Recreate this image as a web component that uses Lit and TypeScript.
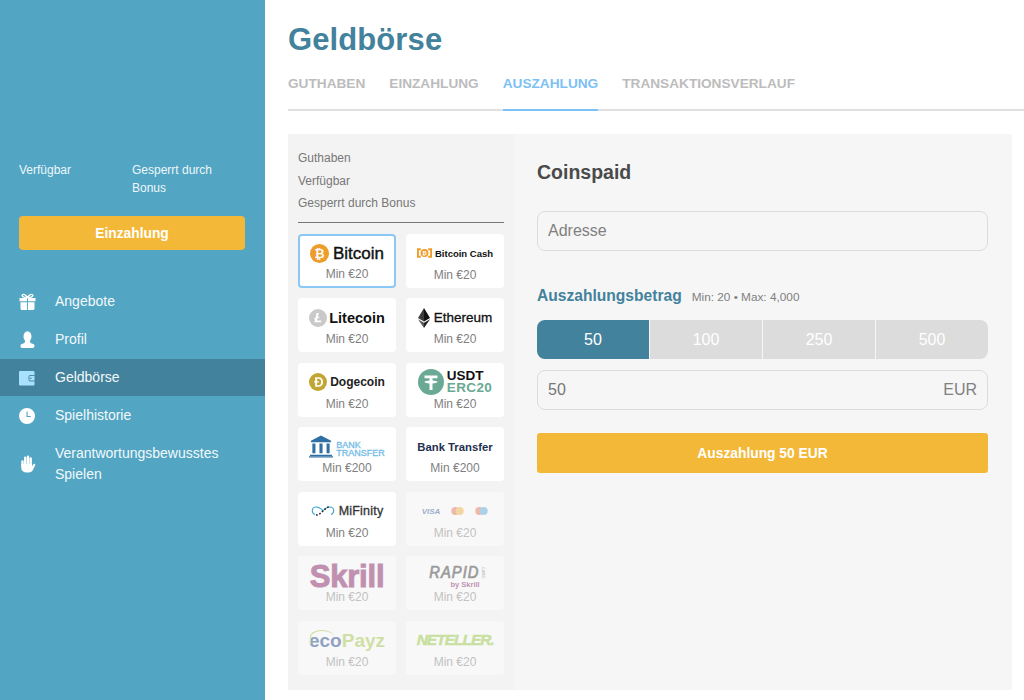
import { LitElement, html, css, svg } from "lit";
import { customElement } from "lit/decorators.js";

const nav = [
  { label: "Angebote", icon: svg`<path d="M.500 5h7.600v3.200H.500zM9 5h7.500v3.200H9zM1.500 9.200h6.600V17H3a1.500 1.500 0 0 1-1.500-1.500zM9 9.200h6.500v6.300A1.500 1.500 0 0 1 14 17H9z"/><path d="M8.500 4.500C6.500 1.500 4.500 1 3.500 1.700c-1 1-.2 2.800 5 2.800zm0 0c2-3 4-3.500 5-2.800 1 1 .2 2.800-5 2.800z" fill="none" stroke="#fff" stroke-width="1.400"/>` },
  { label: "Profil", icon: svg`<ellipse cx="8.500" cy="5.500" rx="4" ry="5.200"/><path d="M6.300 9.500h4.400l.8 2.500 3.300 1.300c1 .5 1.100 3.700-1 3.700H3.200c-2.100 0-2-3.200-1-3.700L5.500 12z"/>` },
  { label: "Geldbörse", active: true, icon: svg`<rect x="0" y="2" width="15.500" height="14.500" rx="1" fill="#a8e1fb"/><rect x="10" y="6.500" width="6" height="5.500" rx=".8" fill="#a8e1fb" stroke="#43829c" stroke-width=".9"/><circle cx="11.800" cy="9.200" r=".8" fill="#43829c"/>` },
  { label: "Spielhistorie", icon: svg`<path fill-rule="evenodd" d="M8 1a8 8 0 1 1 0 16A8 8 0 0 1 8 1zM7.500 4.500v5.500h4.300V9H8.600V4.500z"/>` },
  { label: "Verantwortungsbewusstes Spielen", icon: svg`<g stroke="#fff" stroke-width="2.400" stroke-linecap="round" fill="none"><path d="M3.500 6.500V11M6.200 2.800V10M9 1.800V10M11.700 3.400V11"/></g><path d="M2.300 9h10.600v2.600l1.200-2c.9-1.400 2.700-.6 2 .8l-2.100 4.300c-.9 1.700-2.300 2.800-4.400 2.800H7c-2.900 0-4.700-2-4.700-4.700z"/>` },
];

const btc = html`<svg class="logo" width="19" height="19" viewBox="0 0 20 20"><circle cx="10" cy="10" r="10" fill="#ee9c2c"/><text x="10" y="14.500" text-anchor="middle" class="glyph" font-size="13" fill="#fff">₿</text></svg>`;
const ltc = html`<svg class="logo" width="18" height="18" viewBox="0 0 18 18"><circle cx="9" cy="9" r="9" fill="#c9c9c9"/><path d="M7.500 4h2.300L8.800 8l1.600-.6-.3 1.300-1.600.6-.6 2.300h4.500l-.4 1.600H5.300l.9-3.200-1.200.4.300-1.200 1.300-.5z" fill="#fff"/></svg>`;
const eth = html`<svg class="logo" width="12" height="20" viewBox="0 0 12 20"><path d="M6 0 0 10l6 3.500z" fill="#3c3c3d"/><path d="M6 0l6 10-6 3.500z" fill="#141414"/><path d="M0 11.300 6 20v-5.200z" fill="#5a5a5a"/><path d="M12 11.300 6 20v-5.200z" fill="#222"/></svg>`;
const doge = html`<svg class="logo" width="18" height="18" viewBox="0 0 19 19"><circle cx="9.500" cy="9.500" r="9.500" fill="#c2a633"/><path fill-rule="evenodd" d="M6.500 4.500h3.600c3 0 4.700 2 4.700 5s-1.700 5-4.700 5H6.500V10H5.300V8.800h1.200zm2 1.700v2.600h2v1.200h-2v3h1.600c1.800 0 2.700-1.300 2.700-3.400s-.9-3.400-2.700-3.400z" fill="#fff"/></svg>`;
const usdt = html`<svg class="logo" width="26" height="26" viewBox="0 0 26 26"><circle cx="13" cy="13" r="13" fill="#6aa993"/><path d="M6.500 6.500h13v2.800h-5v2.300c2.800.2 5 .8 5 1.400s-2.200 1.200-5 1.400V21h-3v-6.600c-2.800-.2-5-.8-5-1.400s2.200-1.200 5-1.400V9.300h-5z" fill="#fff"/></svg>`;
const bank = html`<svg class="logo" width="24" height="23" viewBox="0 0 25 23"><path d="M12.500 0 23 5.500V7H2V5.500z" fill="#2f6fa3"/><path d="M3.500 8.500h3.200v10H3.500zM10.900 8.500h3.200v10h-3.200zM18.300 8.500h3.200v10h-3.200z" fill="#2f6fa3"/><path d="M1 20h23v1.300H1zM0 21.700h25V23H0z" fill="#2f6fa3"/></svg>`;
const inf = html`<svg class="logo" width="24" height="12" viewBox="0 0 24 12"><path d="M12 6C9 2 6 1.500 3.500 2.200.5 3 .5 8.500 4 9.500" fill="none" stroke="#3ba4d4" stroke-width="1.100"/><path d="M12 6c3-4 6-4.500 8.500-3.800 3 .8 3 6.300-.5 7.300" fill="none" stroke="#3ba4d4" stroke-width="1.100"/><path d="M5 10c3 0 5-2 7-4s4-4 6-4" fill="none" stroke="#222" stroke-width="1.600" stroke-dasharray="1.600 1.800"/></svg>`;
const cards = html`<span class="cards"><span class="visa">VISA</span><svg width="13" height="8" viewBox="0 0 14 9"><circle cx="4.500" cy="4.500" r="4.500" fill="#e0765a"/><circle cx="9.500" cy="4.500" r="4.500" fill="#eeb04a"/></svg><svg width="13" height="8" viewBox="0 0 14 9"><circle cx="4.500" cy="4.500" r="4.500" fill="#e0765a"/><circle cx="9.500" cy="4.500" r="4.500" fill="#5aa8dc"/></svg></span>`;

const methods = [
  { logo: html`${btc}<span class="n btc">Bitcoin</span>`, min: "Min €20", sel: true },
  { logo: html`<svg class="logo" width="15" height="10" viewBox="0 0 16 10"><path d="M4 1H1v8h3M12 1h3v8h-3" fill="none" stroke="#f09c2c" stroke-width="2"/><circle cx="8" cy="5" r="4.200" fill="#f09c2c"/><text x="8" y="7.200" text-anchor="middle" class="glyph" font-size="6" fill="#fff">₿</text></svg><span class="n bch">Bitcoin Cash</span>`, min: "Min €20" },
  { logo: html`${ltc}<span class="n ltc">Litecoin</span>`, min: "Min €20" },
  { logo: html`${eth}<span class="n eth">Ethereum</span>`, min: "Min €20" },
  { logo: html`${doge}<span class="n doge">Dogecoin</span>`, min: "Min €20" },
  { logo: html`${usdt}<span class="usdt"><b>USDT</b><i>ERC20</i></span>`, min: "Min €20" },
  { logo: html`${bank}<span class="bt"><span>BANK</span><span>TRANSFER</span></span>`, min: "Min €200" },
  { logo: html`<span class="n bank2">Bank Transfer</span>`, min: "Min €200" },
  { logo: html`${inf}<span class="n mif">MiFinity</span>`, min: "Min €20" },
  { logo: cards, min: "Min €20", off: true },
  { logo: html`<span class="skrill">Skrill</span>`, min: "Min €20", off: true },
  { logo: html`<span class="rapid"><span class="r0"><span class="r1">RAPID</span><span class="r3">CARD</span></span><span class="r2">by Skrill</span></span>`, min: "Min €20", off: true },
  { logo: html`<span class="eco"><span>eco</span><span>Payz</span></span>`, min: "Min €20", off: true },
  { logo: html`<span class="net">NETELLER<small>.</small></span>`, min: "Min €20", off: true },
];

@customElement("app-root")
export class AppRoot extends LitElement {
  static styles = css`
    :host { display: block; width: 1024px; height: 700px; overflow: hidden; background: #fff; font-family: "Liberation Sans", Arial, sans-serif; color: #666; }
    .page { display: flex; height: 700px; }
    aside { width: 265px; flex: none; background: #52a5c3; color: #fff; padding-top: 161px; box-sizing: border-box; }
    .bal { display: flex; padding: 0 19px; font-size: 12px; line-height: 18px; color: #eef7fa; }
    .bal div:first-child { width: 113px; }
    .bal div:last-child { width: 90px; }
    .dep { margin: 19px 20px 0 19px; height: 34px; background: #f3b838; border-radius: 4px; display: flex; align-items: center; justify-content: center; font-weight: 700; font-size: 13.800px; }
    nav { margin-top: 32px; display: flex; flex-direction: column; gap: 1px; padding-top: 1px; }
    .item { display: flex; align-items: center; padding: 8px 19px; line-height: 21px; font-size: 14px; color: #f2f9fb; }
    .item.active { background: #43829c; }
    .item svg { width: 18px; height: 18px; flex: none; fill: #fff; margin-right: 18px; }
    .item span { width: 180px; }
    main { flex: 1; padding: 0 12px 0 23px; min-width: 0; }
    h1 { margin: 0; padding-top: 21px; font-size: 31px; line-height: 37px; font-weight: 700; color: #43829c; letter-spacing: .1px; }
    .tabs { display: flex; gap: 24px; margin: 15px -12px 0 0; border-bottom: 2px solid #e0e0e0; height: 36px; }
    .tab { font-size: 13.650px; font-weight: 700; line-height: 20px; color: #bcbcbc; height: 38px; padding-top: 1px; box-sizing: border-box; border-bottom: 2px solid transparent; }
    .tab.active { color: #7cc1f5; border-bottom-color: #7cc1f5; }
    .panel { display: flex; margin-top: 23px; height: 556px; background: #f6f6f6; }
    .left { width: 226px; flex: none; background: #f3f3f3; padding: 13px 10px 0; box-sizing: border-box; }
    .info { font-size: 12px; line-height: 22.500px; color: #777; border-bottom: 1px solid #777; padding-bottom: 7.500px; margin-bottom: 10.900px; width: 206px; }
    .grid { display: grid; grid-template-columns: 98px 98px; column-gap: 10px; row-gap: 10.500px; }
    .card { height: 54px; background: #fff; border-radius: 4px; box-sizing: border-box; display: flex; flex-direction: column; align-items: center; }
    .card.sel { border: 2px solid #8cc8f5; }
    .card.off { background: #f8f8f8; }
    .card.off .lg { opacity: .48; }
    .card.off .min { color: #c2c2c2; }
    .lg { height: 39px; display: flex; align-items: center; justify-content: center; gap: 4px; flex: none; white-space: nowrap; }
    .sel .lg { height: 36px; }
    .min { font-size: 12px; line-height: 14px; color: #7f7f7f; margin-top: -5px; }
    .logo { flex: none; display: block; }
    .glyph { font-family: "DejaVu Sans", sans-serif; font-weight: 700; }
    .n { color: #111; font-weight: 700; }
    .btc { font-size: 17px; font-weight: 400; -webkit-text-stroke: .4px #111; }
    .bch { font-size: 9.500px; margin-left: -1px; }
    .ltc { font-size: 14.500px; margin-left: -2px; }
    .eth { font-size: 13.500px; font-weight: 400; -webkit-text-stroke: .3px #111; }
    .doge { font-size: 12px; color: #222; margin-left: -1px; }
    .usdt { display: flex; flex-direction: column; line-height: 12.500px; font-size: 13.500px; margin-left: -1px; }
    .usdt b { color: #111; }
    .usdt i { font-style: normal; font-weight: 700; color: #6aa993; letter-spacing: .4px; }
    .bt { display: flex; flex-direction: column; color: #72bbe9; font-size: 9px; line-height: 7.500px; -webkit-text-stroke: .3px #72bbe9; margin-left: -1px; margin-top: 6px; }
    .bank2 { font-size: 11.300px; color: #1f3050; }
    .mif { font-size: 12.500px; color: #333; letter-spacing: .2px; font-weight: 400; -webkit-text-stroke: .3px #333; }
    .cards { display: flex; gap: 11px; align-items: center; }
    .visa { font: italic 700 8px "Liberation Sans", sans-serif; color: #3c5a9c; }
    .skrill { font-size: 31px; font-weight: 700; color: #862165; letter-spacing: -.2px; line-height: 30px; margin-top: 2px; -webkit-text-stroke: 1px #862165; }
    .rapid { display: flex; flex-direction: column; align-items: flex-end; margin-top: 3px; }
    .r0 { display: flex; align-items: center; gap: 1px; }
    .r1 { font-size: 16px; font-style: italic; color: #333; letter-spacing: 1.100px; line-height: 15px; -webkit-text-stroke: .7px #333; display: inline-block; transform: scaleX(.92); transform-origin: right center; }
    .r3 { writing-mode: vertical-rl; font-size: 4px; line-height: 4px; color: #666; }
    .r2 { font-size: 7.500px; font-weight: 700; color: #862165; line-height: 8px; margin: 1px 5px 0 0; }
    .eco { font-size: 19px; font-weight: 700; line-height: 20px; margin-top: 2px; position: relative; }
    .eco::before { content: ""; position: absolute; left: 1px; top: -1px; width: 24px; height: 14px; border-top: 1px solid #a4c64a; border-left: 1px solid #a4c64a; border-radius: 50% 50% 0 0; box-sizing: border-box; }
    .eco span:first-child { color: #1f4788; }
    .eco span:last-child { color: #a4c64a; }
    .net { font-size: 15.500px; font-weight: 700; font-style: italic; color: #95c83d; letter-spacing: -1px; -webkit-text-stroke: .5px #95c83d; }
    .net small { color: #95c83d; font-size: 14px; }
    .right { flex: 1; padding: 27px 24px 0 23px; min-width: 0; }
    h2 { margin: 0; font-size: 19.500px; line-height: 23px; font-weight: 700; color: #4a4a4a; }
    .field { height: 40px; box-sizing: border-box; border: 1px solid #dcdcdc; border-radius: 8px; display: flex; align-items: center; justify-content: space-between; padding: 0 10px; font-size: 16px; }
    .addr { margin-top: 27px; color: #808080; }
    .lab { display: flex; align-items: baseline; gap: 10px; margin-top: 35px; line-height: 20px; }
    .lab b { font-size: 15.600px; color: #43829c; }
    .lab span { font-size: 11.800px; color: #808080; }
    .seg { display: grid; grid-template-columns: repeat(4, 1fr); gap: 1px; margin-top: 13px; height: 39px; border-radius: 8px; overflow: hidden; }
    .seg div { background: #dcdcdc; color: #fff; font-size: 16px; display: flex; align-items: center; justify-content: center; }
    .seg div.on { background: #43829c; }
    .amt { margin-top: 11px; color: #777; }
    .amt span:last-child { color: #808080; }
    .go { margin-top: 23px; height: 40px; background: #f3b838; border-radius: 3px; color: #fff; font-weight: 700; font-size: 13.800px; display: flex; align-items: center; justify-content: center; }
  `;

  render() {
    return html`<div class="page">
      <aside>
        <div class="bal"><div>Verfügbar</div><div>Gesperrt durch Bonus</div></div>
        <div class="dep">Einzahlung</div>
        <nav>${nav.map((n) => html`<div class="item ${n.active ? "active" : ""}"><svg viewBox="0 0 18 18">${n.icon}</svg><span>${n.label}</span></div>`)}</nav>
      </aside>
      <main>
        <h1>Geldbörse</h1>
        <div class="tabs">
          <div class="tab">GUTHABEN</div>
          <div class="tab">EINZAHLUNG</div>
          <div class="tab active">AUSZAHLUNG</div>
          <div class="tab">TRANSAKTIONSVERLAUF</div>
        </div>
        <div class="panel">
          <div class="left">
            <div class="info"><div>Guthaben</div><div>Verfügbar</div><div>Gesperrt durch Bonus</div></div>
            <div class="grid">
              ${methods.map((m) => html`<div class="card ${m.sel ? "sel" : ""} ${m.off ? "off" : ""}"><div class="lg">${m.logo}</div><div class="min">${m.min}</div></div>`)}
            </div>
          </div>
          <div class="right">
            <h2>Coinspaid</h2>
            <div class="field addr">Adresse</div>
            <div class="lab"><b>Auszahlungsbetrag</b><span>Min: 20 • Max: 4,000</span></div>
            <div class="seg"><div class="on">50</div><div>100</div><div>250</div><div>500</div></div>
            <div class="field amt"><span>50</span><span>EUR</span></div>
            <div class="go">Auszahlung 50 EUR</div>
          </div>
        </div>
      </main>
    </div>`;
  }
}
